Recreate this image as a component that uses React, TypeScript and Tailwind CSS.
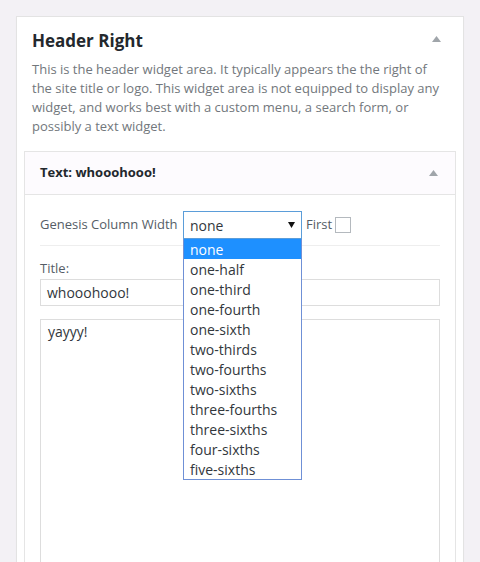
import React from "react";

const options = [
  "none",
  "one-half",
  "one-third",
  "one-fourth",
  "one-sixth",
  "two-thirds",
  "two-fourths",
  "two-sixths",
  "three-fourths",
  "three-sixths",
  "four-sixths",
  "five-sixths",
];

function Up({ color }: { color: string }) {
  return (
    <svg width="9" height="6" viewBox="0 0 9 6" className="block">
      <polygon points="4.5,0 9,6 0,6" fill={color} />
    </svg>
  );
}

export default function App() {
  return (
    <div className="w-[480px] h-[562px] overflow-hidden bg-[#f3f1f5] px-4 pt-4 font-['Open_Sans',sans-serif]">
      <div className="h-[620px] border border-[#e3e3e3] bg-white px-[7px] shadow-[0_1px_1px_rgba(0,0,0,0.04)]">
        <div className="flex items-start justify-between px-2 pt-[12px]">
          <h3 className="text-[17px] leading-6 font-bold text-[#23282d]">Header Right</h3>
          <div className="mt-[7px] mr-[7px]">
            <Up color="#a0a5aa" />
          </div>
        </div>
        <p className="mt-[7px] px-2 text-[13px] leading-[19px] text-[#72777c]">
          This is the header widget area. It typically appears the the right of the site title or logo. This widget area is not equipped to display any widget, and works best with a custom menu, a search form, or possibly a text widget.
        </p>
        <div className="mt-[15px] border border-[#e5e5e5] h-[500px]">
          <div className="flex h-[43px] items-center justify-between border-b border-[#e5e5e5] bg-[#fdfbfe] pl-[15px] pr-[17px]">
            <span className="text-[13px] font-bold text-[#23282d]">Text: whooohooo!</span>
            <Up color="#a0a5aa" />
          </div>
          <div className="px-[15px] pt-[16px]">
            <div className="flex items-center border-b border-[#eeeeee] pb-[6px]">
              <div className="flex h-[28px] items-center">
                <span className="w-[143px] text-[13px] text-[#555d66]">Genesis Column Width</span>
                <div className="relative">
                  <div className="flex h-[28px] w-[119px] items-center justify-between border border-[#5b9dd9] bg-white pl-[6px] pr-[6px]">
                    <span className="pt-px text-[14px] text-[#32373c]">none</span>
                    <svg width="7" height="6" viewBox="0 0 7 6" className="block">
                      <polygon points="0,0 7,0 3.5,6" fill="#111" />
                    </svg>
                  </div>
                  <div className="absolute left-0 top-full z-10 w-[119px] border-x border-b border-[#6f90d6] bg-white">
                    {options.map((o, i) => (
                      <div
                        key={o}
                        className={
                          i === 0
                            ? "h-5 bg-[#1e90ff] pl-[6px] pt-px text-[14px] leading-[19px] text-white"
                            : "h-5 pl-[6px] pt-px text-[14px] leading-[19px] text-[#32373c]"
                        }
                      >
                        {o}
                      </div>
                    ))}
                  </div>
                </div>
                <span className="ml-1 text-[13px] text-[#555d66]">First</span>
                <span className="ml-[3px] block h-4 w-4 border border-[#b4b9be] bg-white" />
              </div>
            </div>
            <div className="mt-[13px] text-[13px] leading-[19px] text-[#555d66]">Title:</div>
            <div className="mt-[1px] flex h-[27px] items-center border border-[#dddddd] pl-[6px] text-[14px] text-[#32373c]">
              whooohooo!
            </div>
            <div className="mt-[13px] h-[300px] border border-[#dddddd] pl-[7px] pt-[2px] text-[14px] leading-5 text-[#32373c]">
              yayyy!
            </div>
          </div>
        </div>
      </div>
    </div>
  );
}
